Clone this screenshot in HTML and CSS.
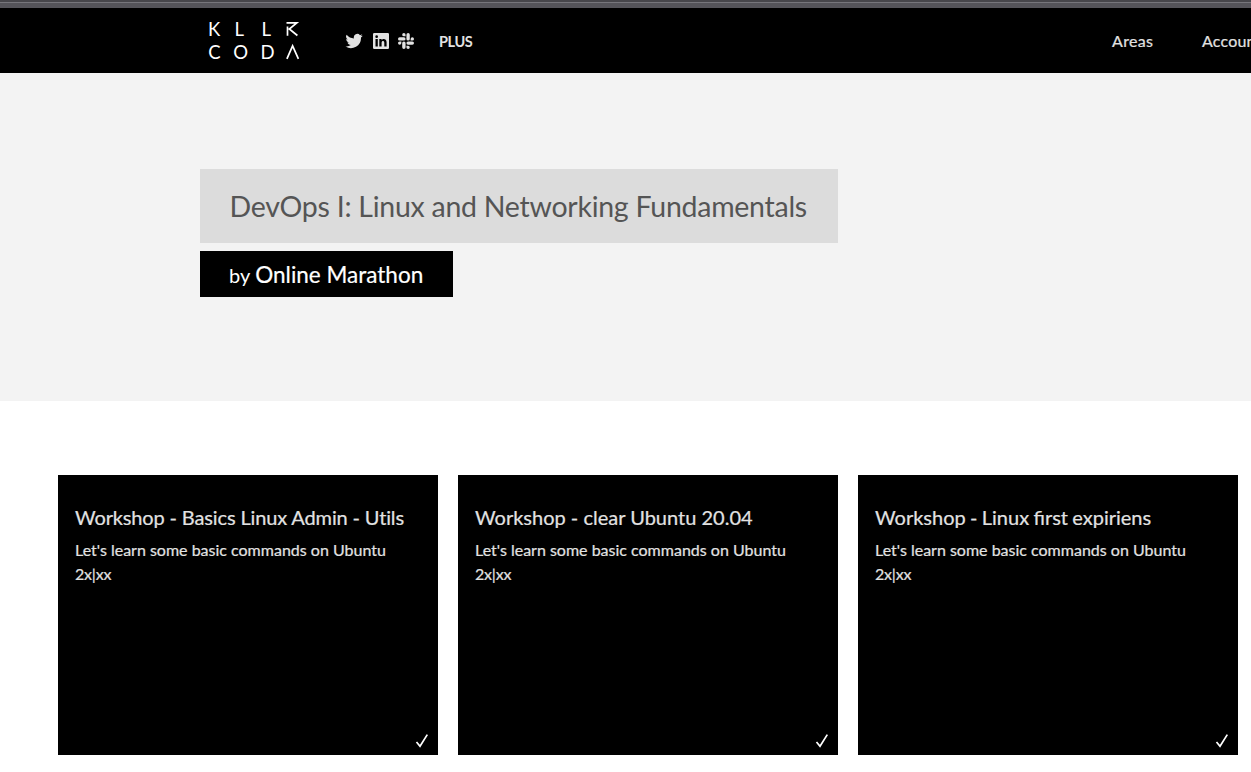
FILE: index.html
```html
<!DOCTYPE html>
<html lang="en">
<head>
<meta charset="utf-8">
<title>DevOps I: Linux and Networking Fundamentals</title>
<link rel="stylesheet" href="styles.css">
</head>
<body>
<div class="top-strip"></div>
<header class="nav">
  <a class="logo" aria-label="Killercoda">
    <svg width="100" height="56" viewBox="204 13 100 56">
      <g class="logo-text">
        <text x="207.900" y="35.500">K</text><text x="234.600" y="35.500">L</text><text x="261.600" y="35.500">L</text>
        <text x="208.200" y="58.800">C</text><text x="233.300" y="58.800">O</text><text x="260.500" y="58.800">D</text>
      </g>
      <path class="logo-mark" d="M286.500 22.900H296.800L289.300 29L297.400 35.500M287.500 26.500V35.700"/>
      <path class="logo-mark" d="M286.900 58.900L292.600 45.800L298.400 58.900"/>
    </svg>
  </a>
  <div class="social">
    <svg width="18" height="18" viewBox="0 0 24 24"><path d="M23.6 4.9c-.9.4-1.8.6-2.7.8 1-.6 1.7-1.5 2.1-2.6-.9.5-1.9.9-3 1.1a4.7 4.7 0 0 0-8.1 4.3A13.400 13.400 0 0 1 2.200 3.600a4.700 4.700 0 0 0 1.500 6.300c-.8 0-1.500-.2-2.100-.6 0 2.300 1.600 4.200 3.800 4.700-.7.200-1.400.2-2.100.1.600 1.900 2.300 3.200 4.400 3.300A9.500 9.500 0 0 1 .7 19.300a13.400 13.400 0 0 0 20.600-11.900c.9-.7 1.700-1.500 2.300-2.500z"/></svg>
    <svg width="16" height="16" viewBox="0 0 16 16"><path fill-rule="evenodd" d="M1.200 0h13.600Q16 0 16 1.200v13.600q0 1.200-1.200 1.200H1.200Q0 16 0 14.800V1.200Q0 0 1.200 0zM2.500 6.100v7.500h2.300V6.100zM3.650 2.300a1.350 1.350 0 1 0 0 2.700a1.350 1.350 0 0 0 0-2.700zM6.300 6.100v7.500h2.300V9.800c0-2.300 2.700-2.300 2.700 0v3.800h2.300V9.200c0-3.700-3.800-4-5-2.100v-1z"/></svg>
    <svg width="16" height="16" viewBox="0 0 24 24"><path d="M5.040 15.160a2.520 2.520 0 1 1-2.520-2.520h2.520zM6.310 15.160a2.520 2.520 0 0 1 5.040 0v6.310a2.520 2.520 0 0 1-5.040 0zM8.830 5.040a2.520 2.520 0 1 1 2.520-2.520v2.520zM8.830 6.310a2.520 2.520 0 0 1 0 5.040H2.520a2.520 2.520 0 0 1 0-5.040zM18.960 8.830a2.520 2.520 0 1 1 2.520 2.520h-2.520zM17.690 8.830a2.520 2.520 0 0 1-5.040 0V2.520a2.520 2.520 0 0 1 5.040 0zM15.170 18.960a2.520 2.520 0 1 1-2.520 2.520v-2.520zM15.170 17.690a2.520 2.520 0 0 1 0-5.040h6.310a2.520 2.520 0 0 1 0 5.040z"/></svg>
  </div>
  <a class="plus">PLUS</a>
  <nav class="links"><a class="areas">Areas</a><a class="account">Account</a></nav>
</header>
<section class="hero">
  <h1 class="title"><span>DevOps I: Linux and Networking Fundamentals</span></h1>
  <p class="author"><span class="by">by</span><span class="name">Online Marathon</span></p>
</section>
<main class="cards">
  <article class="card">
    <h2 class="card-title t1">Workshop - Basics Linux Admin - Utils</h2>
    <p class="desc">Let's learn some basic commands on Ubuntu<br><span class="ver">2x|xx</span></p>
    <svg class="check" width="14" height="16" viewBox="0 0 14 16"><path d="M1.500 9L5 13.300L12.300 1.600"/></svg>
  </article>
  <article class="card">
    <h2 class="card-title t2">Workshop - clear Ubuntu 20.04</h2>
    <p class="desc">Let's learn some basic commands on Ubuntu<br><span class="ver">2x|xx</span></p>
    <svg class="check" width="14" height="16" viewBox="0 0 14 16"><path d="M1.500 9L5 13.300L12.300 1.600"/></svg>
  </article>
  <article class="card">
    <h2 class="card-title t3">Workshop - Linux first expiriens</h2>
    <p class="desc">Let's learn some basic commands on Ubuntu<br><span class="ver">2x|xx</span></p>
    <svg class="check" width="14" height="16" viewBox="0 0 14 16"><path d="M1.500 9L5 13.300L12.300 1.600"/></svg>
  </article>
</main>
</body>
</html>
```
FILE: styles.css
```css
* { box-sizing: border-box; }
body { margin: 0; height: 772px; overflow: hidden; background: #fff; font-family: Lato, sans-serif; }
h1, h2, p { margin: 0; font-weight: 400; }
.top-strip { height: 8px; background: linear-gradient(#47464b 0 2px, #77767c 2px 3px, #55545a 3px 8px); }
.nav { height: 65px; background: #000; color: #e2e2e2; display: flex; align-items: center; padding-left: 204px; overflow: hidden; white-space: nowrap; }
.nav > * { flex: none; }
.logo { width: 141px; height: 56px; }
.logo svg { display: block; }
.logo-text { fill: #fff; font-size: 18.500px; }
.logo-mark { fill: none; stroke: #fff; stroke-width: 1.700; }
.social { display: flex; align-items: center; width: 94px; fill: #e2e2e2; }
.social svg { flex: none; margin-right: 10px; }
.social svg + svg { margin-right: 9px; }
.plus { font-size: 14.500px; font-weight: 700; letter-spacing: -.4px; width: 673px; padding-top: 1px; }
.links { display: flex; font-size: 16px; letter-spacing: .35px; -webkit-text-stroke: .2px; }
.areas { width: 90px; }
.account { letter-spacing: .2px; }
.hero { height: 328px; padding: 96px 0 0 200px; background: #f3f3f3; display: flex; flex-direction: column; align-items: flex-start; gap: 8px; white-space: nowrap; }
.title { width: 638px; height: 74px; padding-left: 29.500px; background: #dcdcdc; color: #555; font-size: 28.500px; line-height: 74px; letter-spacing: -.26px; }
.author { width: 253px; height: 46px; padding-left: 29px; background: #000; color: #fff; display: flex; align-items: baseline; gap: 5px; line-height: 47px; }
.by { font-size: 20px; }
.name { font-size: 22.500px; -webkit-text-stroke: .2px; }
.cards { display: grid; grid-template-columns: repeat(3, 380px); gap: 20px; padding: 74px 0 0 58px; }
.card { height: 280px; background: #000; color: #e2e2e2; padding: 27px 9px 6px 17px; display: flex; flex-direction: column; white-space: nowrap; -webkit-text-stroke: .2px; }
.card-title { font-size: 20px; line-height: 30px; }
.t1 { letter-spacing: -.14px; }
.t3 { word-spacing: -.8px; }
.desc { margin-top: 6px; font-size: 16px; line-height: 24px; }
.ver { letter-spacing: -.2px; }
.check { margin: auto 0 0 auto; fill: none; stroke: #fff; stroke-width: 1.700; }
```
